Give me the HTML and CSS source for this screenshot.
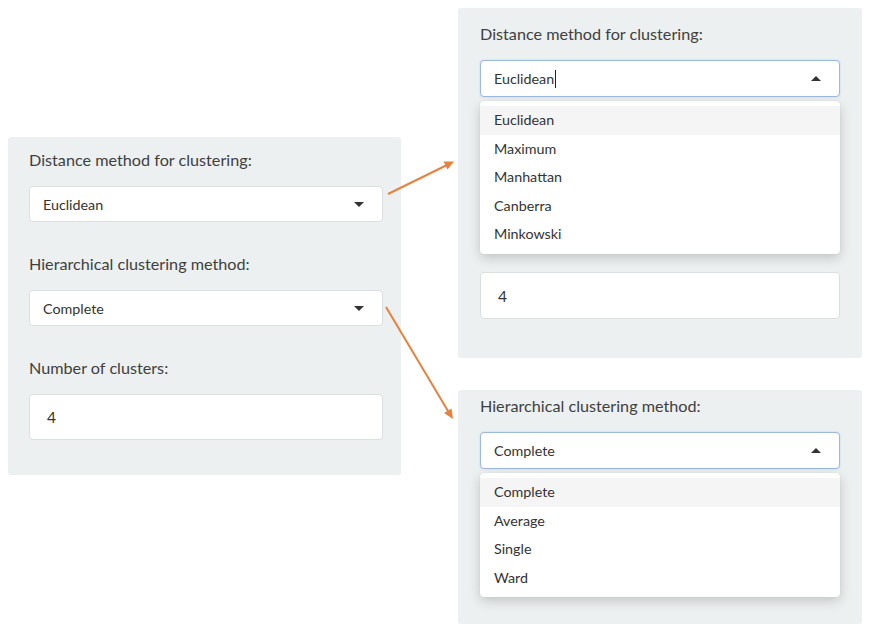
FILE: index.html
```html
<!DOCTYPE html>
<html lang="en">
<head>
<meta charset="utf-8">
<title>Clustering options</title>
<link rel="stylesheet" href="styles.css">
</head>
<body>
<div class="canvas">
  <section class="panel panel-left">
    <div class="group">
      <label class="label">Distance method for clustering:</label>
      <div class="select"><span class="value">Euclidean</span><span class="caret caret-down"></span></div>
    </div>
    <div class="group group-2">
      <label class="label">Hierarchical clustering method:</label>
      <div class="select"><span class="value">Complete</span><span class="caret caret-down"></span></div>
    </div>
    <div class="group group-3">
      <label class="label">Number of clusters:</label>
      <div class="number">4</div>
    </div>
  </section>

  <div class="col-right">
    <section class="panel panel-tr">
      <div class="group">
        <label class="label">Distance method for clustering:</label>
        <div class="select-wrap">
          <div class="select focused"><span class="value">Euclidean<span class="cursor"></span></span><span class="caret caret-up"></span></div>
          <ul class="dropdown">
            <li class="active">Euclidean</li>
            <li>Maximum</li>
            <li>Manhattan</li>
            <li>Canberra</li>
            <li>Minkowski</li>
          </ul>
        </div>
      </div>
      <div class="number number-tr">4</div>
    </section>

    <section class="panel panel-br">
      <div class="group">
        <label class="label">Hierarchical clustering method:</label>
        <div class="select-wrap">
          <div class="select focused"><span class="value">Complete</span><span class="caret caret-up"></span></div>
          <ul class="dropdown">
            <li class="active">Complete</li>
            <li>Average</li>
            <li>Single</li>
            <li>Ward</li>
          </ul>
        </div>
      </div>
    </section>
  </div>

  <svg class="arrows" width="876" height="632" viewBox="0 0 876 632">
    <line x1="388" y1="194" x2="446" y2="165.5" stroke="#e5823f" stroke-width="2"/>
    <polygon points="454,161.5 443.5,161.5 447.5,169.5" fill="#e5823f"/>
    <line x1="386" y1="307" x2="448" y2="411" stroke="#e5823f" stroke-width="2"/>
    <polygon points="453,419 444,413 451.5,408.5" fill="#e5823f"/>
  </svg>
</div>
</body>
</html>
```

FILE: styles.css
```css
* { box-sizing: border-box; }

html, body {
  margin: 0;
  padding: 0;
  background: #ffffff;
}

body {
  font-family: Lato, "Open Sans", "Liberation Sans", sans-serif;
  color: #3a3a3a;
}

.canvas {
  position: relative;
  width: 876px;
  height: 632px;
  display: flex;
  align-items: flex-start;
  gap: 57px;
  padding: 8px 0 0 8px;
}

.panel {
  background: #ecf0f1;
  border-radius: 3px;
}

.panel-left {
  width: 393px;
  margin-top: 129px;
  padding: 13px 18px 35px 21px;
}

.col-right {
  display: flex;
  flex-direction: column;
  gap: 32px;
  width: 404px;
}

.panel-tr {
  padding: 16px 22px 39px 22px;
}

.panel-br {
  padding: 6px 22px 155px 22px;
}

.group { display: flex; flex-direction: column; }
.group-2 { margin-top: 32px; }
.group-3 { margin-top: 32px; }

.label {
  font-size: 16.2px;
  line-height: 20px;
  margin-bottom: 16px;
  color: #404040;
}

.select-wrap { position: relative; }

.select {
  height: 36px;
  background: #ffffff;
  border: 1px solid #dcdfe2;
  border-radius: 4px;
  display: flex;
  align-items: center;
  justify-content: space-between;
  padding: 0 18px 0 13px;
  font-size: 14.3px;
  color: #333333;
}

.select.focused {
  height: 37px;
  border-color: #9db9dc;
  box-shadow: 0 0 2px rgba(102, 153, 220, 0.35);
}

.value { display: inline-flex; align-items: center; }

.cursor {
  display: inline-block;
  width: 1px;
  height: 18px;
  background: #222;
  margin-left: 1px;
}

.caret {
  width: 0;
  height: 0;
  border-left: 5px solid transparent;
  border-right: 5px solid transparent;
}
.caret-down { border-top: 5px solid #333; }
.caret-up { border-bottom: 5px solid #333; }

.dropdown {
  position: absolute;
  left: 0;
  right: 0;
  top: calc(100% + 4px);
  margin: 0;
  padding: 5px 0;
  list-style: none;
  background: #ffffff;
  border-radius: 4px;
  box-shadow: 0 4px 12px rgba(0, 0, 0, 0.18), 0 0 1px rgba(0, 0, 0, 0.12);
  font-size: 14.3px;
  color: #333333;
  z-index: 2;
}

.dropdown li {
  height: 28.5px;
  line-height: 28.5px;
  padding: 0 14px;
}

.dropdown li.active { background: #f5f5f5; }

.number {
  height: 46px;
  background: #ffffff;
  border: 1px solid #dcdfe2;
  border-radius: 4px;
  display: flex;
  align-items: center;
  padding: 0 17px;
  font-size: 15.5px;
  color: #333333;
}

.number-tr { margin-top: 175px; height: 47px; }

.arrows {
  position: absolute;
  left: 0;
  top: 0;
  pointer-events: none;
}
```
